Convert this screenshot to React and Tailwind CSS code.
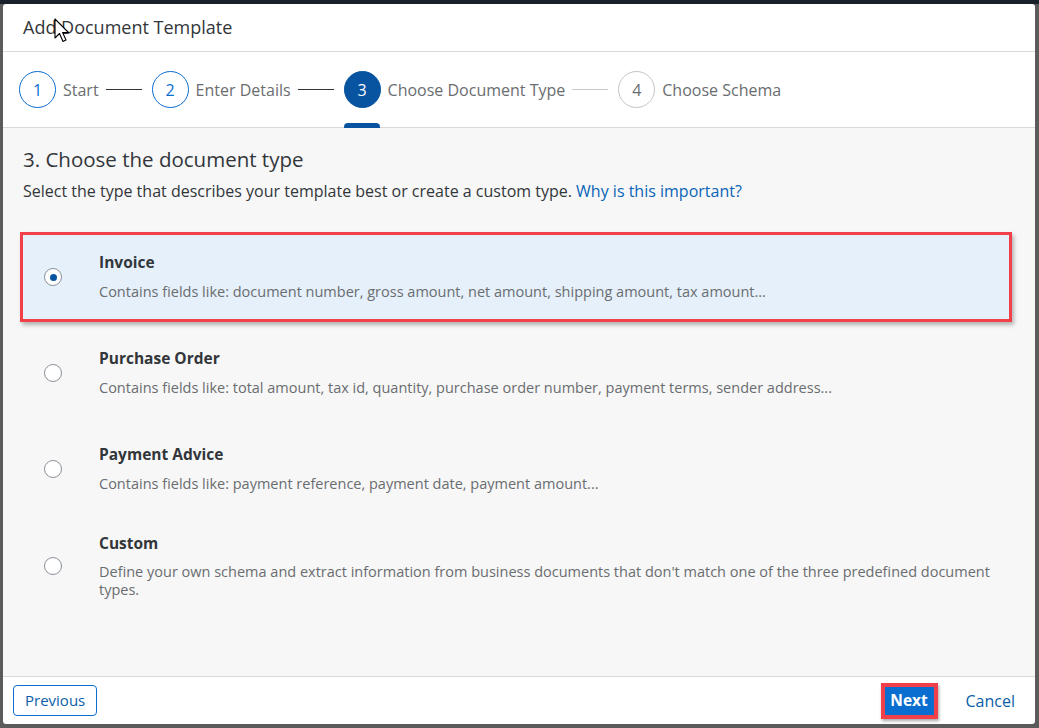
import React from "react";

const font = { fontFamily: '"Open Sans", "Liberation Sans", Arial, sans-serif' };

function Step({ n, label, state, line }) {
  const circle =
    state === "done"
      ? "border border-[#0a6ed1] text-[#0a6ed1] bg-white"
      : state === "active"
      ? "bg-[#0854a0] text-white border border-[#0854a0]"
      : "border border-[#c4c4c4] text-[#6a6d70] bg-white";
  return (
    <div className="flex items-center">
      <div className="relative flex items-center">
        <div className={`w-[37px] h-[37px] rounded-full flex items-center justify-center text-[16px] ${circle}`}>
          {n}
        </div>
        {state === "active" && (
          <div className="absolute left-0 top-[52px] w-[36px] h-[5px] rounded-t-[4px] bg-[#0854a0]" />
        )}
      </div>
      <span className="ml-[7px] text-[16px] text-[#6a6d70]">{label}</span>
      {line && <div className={`ml-[7px] mr-[10px] w-[36px] h-px ${line}`} />}
    </div>
  );
}

function Option({ title, desc, selected, tall }) {
  return (
    <div
      className={`flex items-center ${tall ? "min-h-[92px]" : "min-h-[90px]"} ${
        selected
          ? "bg-[#e5f0fa] border-[3px] border-[#f2404a] shadow-[2px_3px_4px_rgba(0,0,0,0.28)]"
          : "border-[3px] border-transparent"
      }`}
    >
      <div className="pl-[21px] pr-[37px] flex">
        <div className="w-[18px] h-[18px] rounded-full border border-[#89919a] bg-white flex items-center justify-center">
          {selected && <div className="w-[7px] h-[7px] rounded-full bg-[#0854a0]" />}
        </div>
      </div>
      <div className="flex-1 pr-[14px]">
        <div className="text-[15.5px] font-bold text-[#32363a] leading-[20px]">{title}</div>
        <div className={`mt-[10px] text-[14.5px] text-[#6a6d70] ${tall ? "leading-[18px]" : "leading-[20px]"} max-w-[900px]`}>
          {desc}
        </div>
      </div>
    </div>
  );
}

export default function App() {
  return (
    <div className="w-[1039px] h-[728px] bg-[#5b5b5b] border-t-[4px] border-[#18202b] pl-[3px] pr-[4px] pb-[4px] relative overflow-hidden" style={font}>
      <div className="w-[1032px] h-[720px] bg-white rounded-[3px] flex flex-col overflow-hidden">
        {/* header */}
        <div className="h-[48px] shrink-0 border-b border-[#d9d9d9] flex items-center px-[20px]">
          <span className="text-[18px] text-[#32363a]">Add Document Template</span>
        </div>
        {/* wizard */}
        <div className="h-[76px] shrink-0 border-b border-[#d9d9d9] flex items-center pl-[16px]">
          <Step n="1" label="Start" state="done" line="bg-[#32363a]" />
          <Step n="2" label="Enter Details" state="done" line="bg-[#32363a]" />
          <Step n="3" label="Choose Document Type" state="active" line="bg-[#c8c8c8]" />
          <Step n="4" label="Choose Schema" state="todo" />
        </div>
        {/* content */}
        <div className="flex-1 bg-[#f7f7f7] pt-[19px]">
          <div className="px-[20px]">
            <div className="text-[20.5px] leading-[24px] text-[#32363a]">3. Choose the document type</div>
            <div className="mt-[10px] text-[16px] leading-[20px] text-[#32363a]">
              Select the type that describes your template best or create a custom type.{" "}
              <span className="text-[#0a64b8]">Why is this important?</span>
            </div>
          </div>
          <div className="mt-[31px] pl-[17px] pr-[23px] flex flex-col gap-[6px]">
            <Option
              selected
              title="Invoice"
              desc="Contains fields like: document number, gross amount, net amount, shipping amount, tax amount..."
            />
            <Option
              title="Purchase Order"
              desc="Contains fields like: total amount, tax id, quantity, purchase order number, payment terms, sender address..."
            />
            <Option
              title="Payment Advice"
              desc="Contains fields like: payment reference, payment date, payment amount..."
            />
            <Option
              tall
              title="Custom"
              desc="Define your own schema and extract information from business documents that don't match one of the three predefined document types."
            />
          </div>
        </div>
        {/* footer */}
        <div className="h-[48px] shrink-0 border-t border-[#d9d9d9] flex items-center px-[10px]">
          <button className="h-[31px] px-[11px] rounded-[4px] border border-[#0a6ed1] text-[15px] text-[#0a5ea8] bg-white">
            Previous
          </button>
          <div className="flex-1" />
          <div className="border-[4px] border-[#f2404a] shadow-[1px_2px_3px_rgba(0,0,0,0.35)]">
            <div className="h-[28px] w-[49px] bg-[#0a6ed1] flex items-center justify-center text-[15.5px] font-bold text-white">
              Next
            </div>
          </div>
          <span className="ml-[28px] mr-[10px] text-[16px] text-[#0a5ea8]">Cancel</span>
        </div>
      </div>
      {/* mouse cursor */}
      <svg className="absolute left-[54px] top-[14px]" width="16" height="26" viewBox="0 0 16 26">
        <path d="M1 1 L1 20 L5.5 15.5 L9 23.5 L12 22 L8.6 14.6 L14.5 14.5 Z" fill="white" stroke="black" strokeWidth="1.1" strokeLinejoin="round" />
      </svg>
    </div>
  );
}
